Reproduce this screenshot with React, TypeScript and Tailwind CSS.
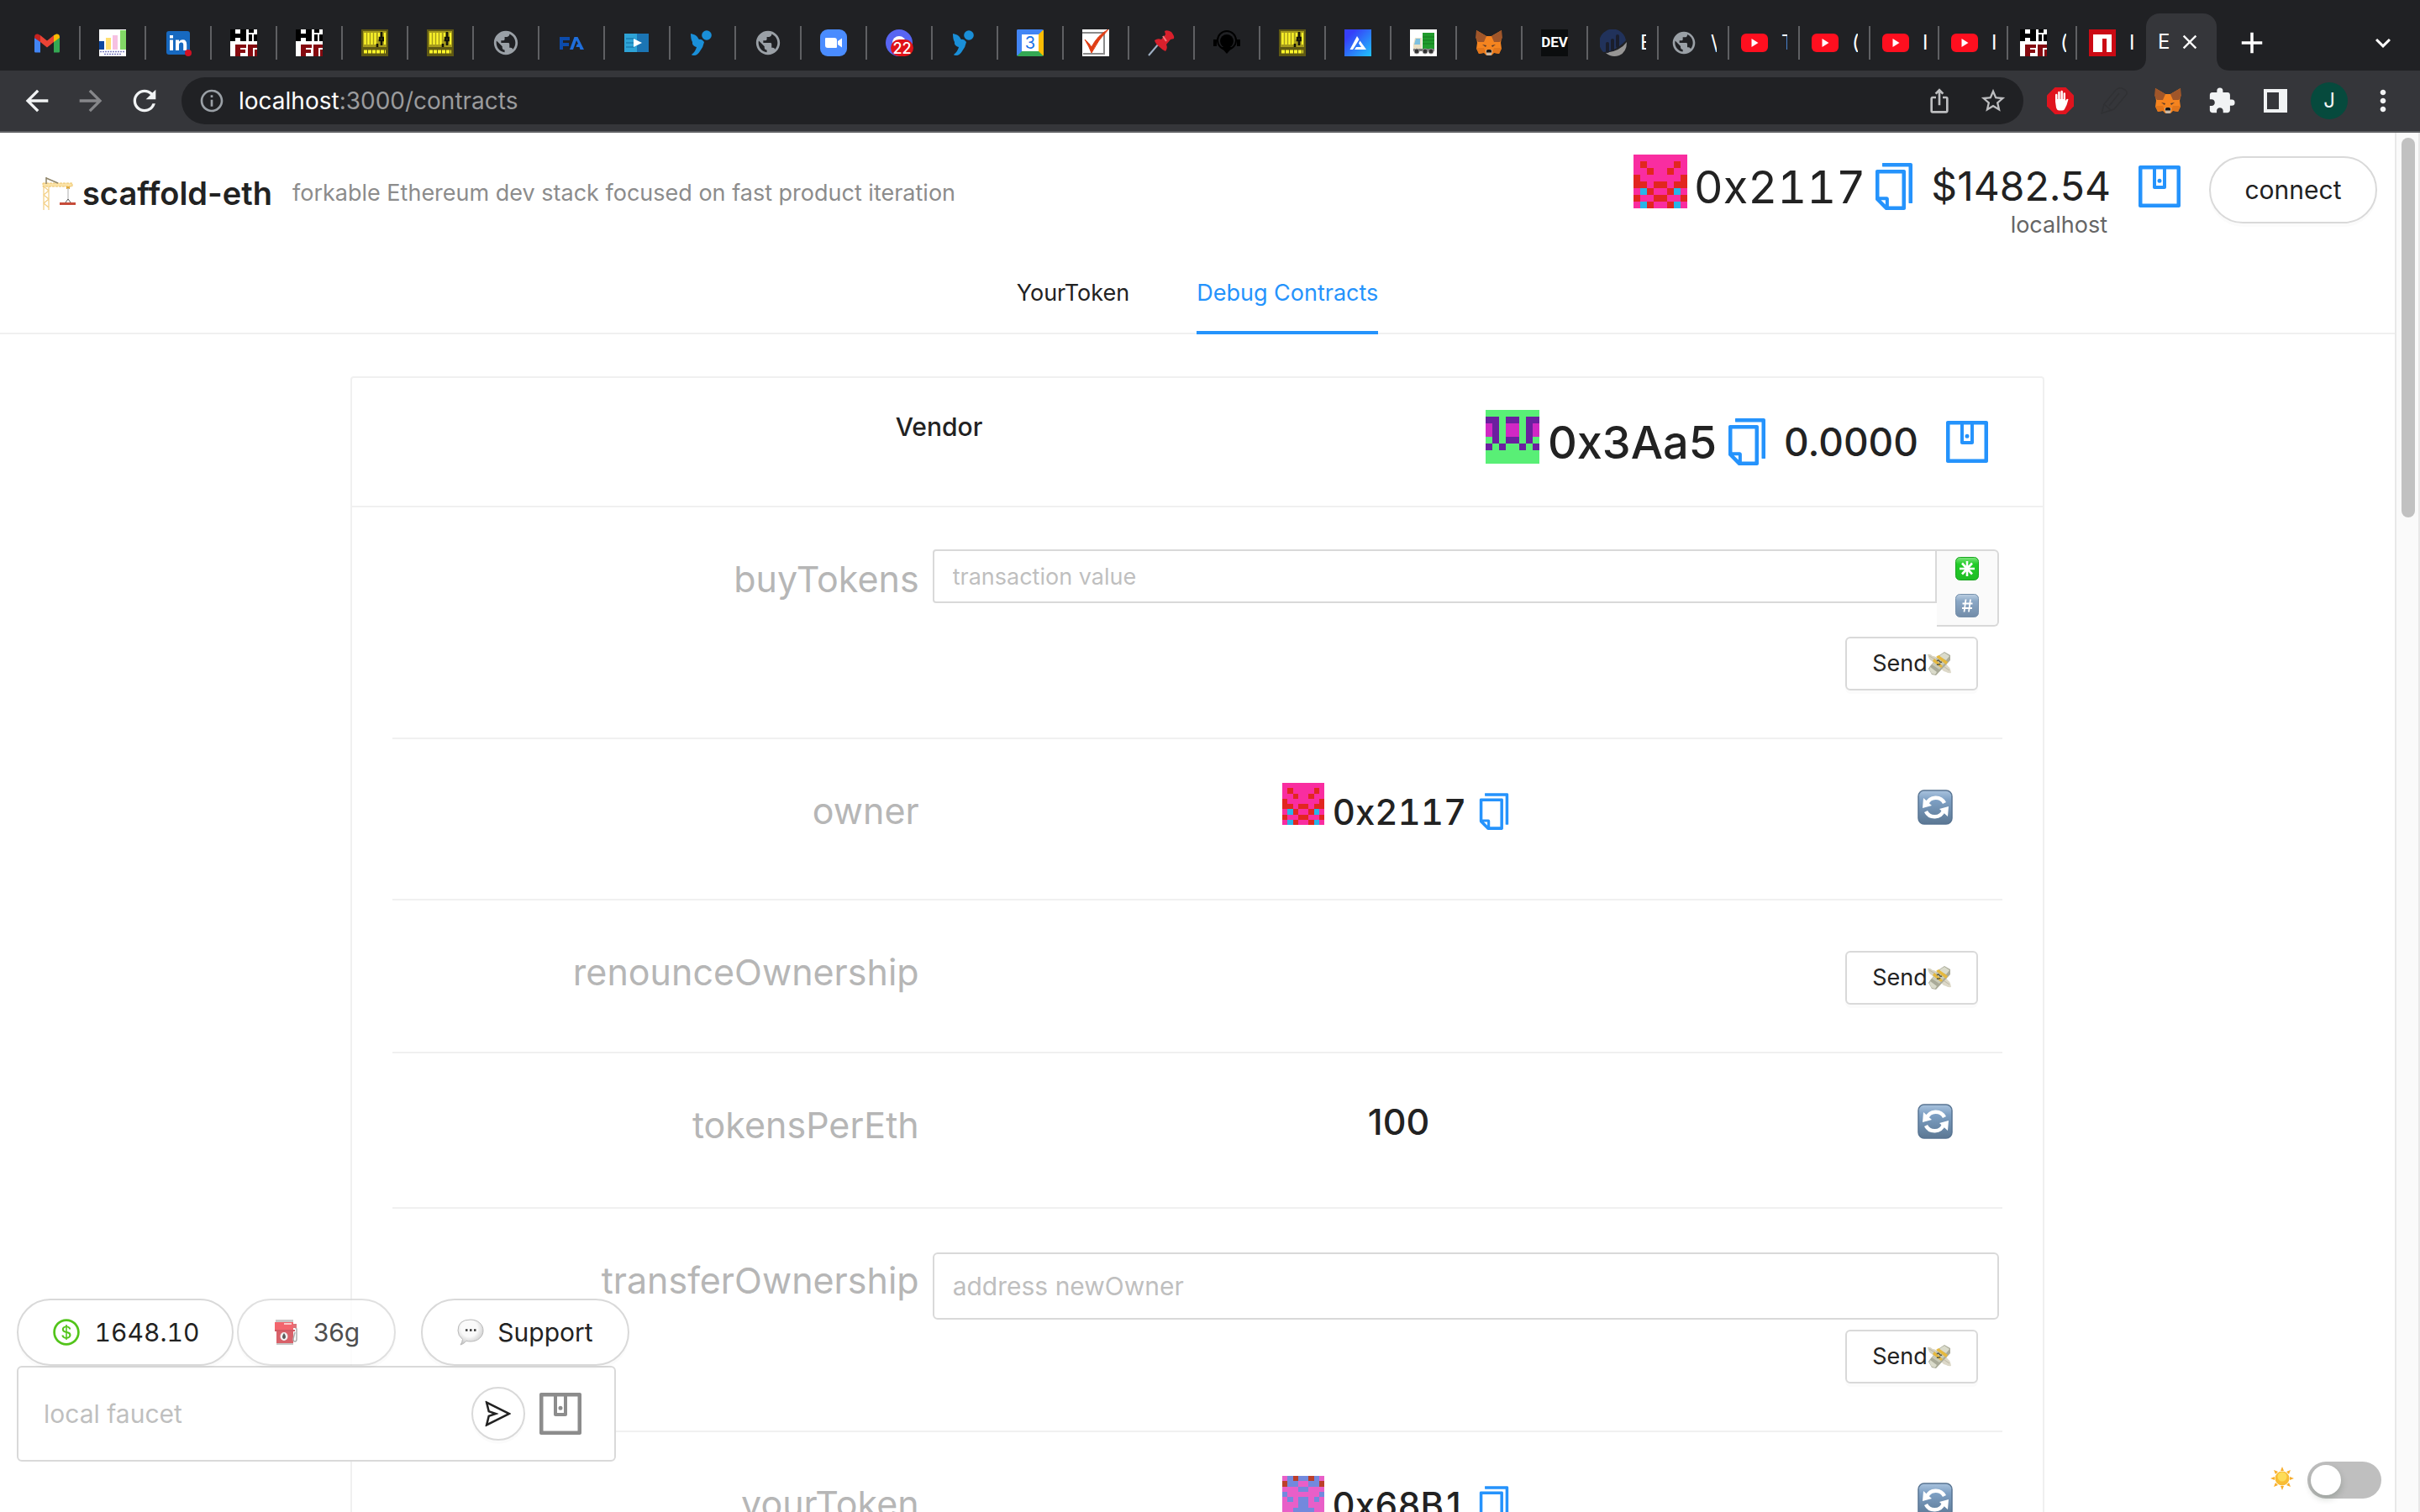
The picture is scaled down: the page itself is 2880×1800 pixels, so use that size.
import { useState } from "react";
import type { ReactNode } from "react";
import { AiOutlineCopy, AiOutlineDollar, AiOutlineSend, AiOutlineWallet } from "react-icons/ai";
import {
  MdAdd,
  MdArrowBack,
  MdArrowForward,
  MdClose,
  MdExpandMore,
  MdExtension,
  MdInfoOutline,
  MdIosShare,
  MdMoreVert,
  MdPublic,
  MdRefresh,
  MdStarBorder,
} from "react-icons/md";

/* ---------- Tab icons ---------- */

function Gmail() {
  return (
    <svg viewBox="0 0 32 32" className="size-8">
      <path d="M1 10v16.500q0 1 1.200 1H8V14z" fill="#4285f4" />
      <path d="M24 14v13.500h5.800q1.200 0 1.200-1V10z" fill="#34a853" />
      <path d="M8 7l8 6.500L24 7v8l-8 6.500L8 15z" fill="#ea4335" />
      <path d="M1 9.500Q1 5 5 5.500L8 7v8l-7-5z" fill="#c5221f" />
      <path d="M31 9.500Q31 5 27 5.500L24 7v8l7-5z" fill="#fbbc04" />
    </svg>
  );
}

function BarChart() {
  return (
    <svg viewBox="0 0 32 32" className="size-8">
      <path d="M0 0h32v32H0z" fill="#fff" />
      <path d="M0 14h6v10H0z" fill="#0d47a1" />
      <path d="M8 10h6v14H8z" fill="#ffdf70" />
      <path d="M16 7h6v17h-6z" fill="#f6c0e2" />
      <path d="M25 1h7v23h-7z" fill="#82d866" />
      <path d="M1 26.500h30M6 29.500h20" stroke="#7d7fc0" strokeWidth="1.400" strokeDasharray="2 1" />
    </svg>
  );
}

function LinkedIn() {
  return (
    <svg viewBox="0 0 32 32" className="size-8">
      <rect x="2" y="2" width="28" height="28" rx="3" fill="#1769c0" />
      <path d="M6 12.500h4V25H6zM6 7h4v3.500H6zM13 12.500h4v2q1.500-2.300 4.500-2.300 4.700 0 4.700 5.800v7h-4v-6.500q0-3-2.300-3-2.900 0-2.900 3.300V25h-4z" fill="#fff" />
      <circle cx="28" cy="28" r="4" fill="#d11124" />
    </svg>
  );
}

function Hifi() {
  return (
    <svg viewBox="0 0 32 32" className="size-8" shapeRendering="crispEdges">
      <path d="M0 0h32v32H0z" fill="#fff" />
      <path d="M0 0h6v5h6V0h7v14h-7v-4H6v4H0zM22 0h6v4h-6zM22 6h4v8h-4zM28 6h4v8h-4z" fill="#000" />
      <path d="M6 18h13v4h-7v2h6v4h-6v4H6zM21 18h11v4h-5v10h-6zM29 24h3v8h-3z" fill="#850a10" />
    </svg>
  );
}

function Mp3() {
  return (
    <svg viewBox="0 0 32 32" className="size-8">
      <path d="M0 0h32v32H0z" fill="#5f5913" />
      <path d="M2 2h28v19H2z" fill="#a79d1c" />
      <path d="M4.500 4v14M8.500 4v14M12.500 4v14M16.500 4v14M21 4v8" stroke="#fdf52a" strokeWidth="2.400" />
      <path d="M24 3v6M22 10h4v3h-4zM24 14v5M19 17v4" stroke="#14140a" strokeWidth="2.600" fill="none" />
      <path d="M28 4v14" stroke="#fdf52a" strokeWidth="2" />
      <path d="M3 26.500h26" stroke="#fdf52a" strokeWidth="4" strokeDasharray="4 1" />
    </svg>
  );
}

function Globe() {
  return <MdPublic className="size-[34px] text-[#9aa0a6]" />;
}

function FaMark() {
  return (
    <svg viewBox="0 0 32 32" className="size-8">
      <path d="M2 9h12v4H6v3h7v4H6v4H2z" fill="#0c4bab" />
      <path d="M14 24l5.500-15h4L31 24h-4.500l-1-3h-4l1.200-3.500h1.500L22 13l-4 11z" fill="#1f6fdc" />
    </svg>
  );
}

function PlayBook() {
  return (
    <svg viewBox="0 0 32 32" className="size-8">
      <path d="M1 5h15v22H1z" fill="#2ea3d6" />
      <path d="M16 5h14v22H16z" fill="#1b75b4" />
      <path d="M3 11h10M3 16h10M3 21h10" stroke="#1e86bb" strokeWidth="2" />
      <path d="M12 11l10 5-10 5z" fill="#fff" />
    </svg>
  );
}

function Bird() {
  return (
    <svg viewBox="0 0 32 32" className="size-8">
      <circle cx="21" cy="7" r="5.800" fill="#1a8fd8" />
      <path d="M2 5q6 1 8 4 1 2 2 3 3-1 6 3-1 6-5 11-3 5-7 5-3 0-3-1 5-4 6-9-4-1-5-4 0-1 0-2-2-3-2-10z" fill="#1a8fd8" />
    </svg>
  );
}

function Zoom() {
  return (
    <svg viewBox="0 0 32 32" className="size-8">
      <rect width="32" height="32" rx="9" fill="#4a8cff" />
      <path d="M6 11q0-1 1-1h10q3 0 3 3v8q0 1-1 1H9q-3 0-3-3zM21 14l5-3.500v11L21 18z" fill="#fff" />
    </svg>
  );
}

function Discord() {
  return (
    <span className="relative block size-8 rounded-full bg-[#5865f2]">
      <span className="absolute left-2 top-2 h-3 w-4 rounded-t-full bg-white" />
      <span className="absolute -right-px bottom-0 flex h-5 w-[27px] items-center justify-center rounded-full bg-[#df1218] text-[18px] font-medium text-white">
        22
      </span>
    </span>
  );
}

function Calendar() {
  return (
    <span className="flex size-8 items-center justify-center overflow-hidden rounded-[2px] border-6 border-l-[#4285f4] border-t-[#4285f4] border-r-[#fbbc04] border-b-[#34a853] bg-white text-[20px] text-[#1a73e8]">
      3
    </span>
  );
}

function CheckBox() {
  return (
    <svg viewBox="0 0 32 32" className="size-8">
      <path d="M0 0h32v32H0z" fill="#fff" />
      <path d="M0 4h26v25H1" fill="none" stroke="#8b8b8b" strokeWidth="2" />
      <path d="M3 12q5 4 8 9Q18 7 31 0 19 12 11 28 8 20 3 12z" fill="#e03d14" stroke="#e03d14" />
    </svg>
  );
}

function Pin() {
  return (
    <svg viewBox="0 0 32 32" className="size-8">
      <path d="M1 31l12-14" stroke="#9fb0c4" strokeWidth="2" />
      <path d="M20 2q3-2 8 1 4 5 3 8l-4 1-5 6q2 4-1 8-3-1-7-5-5-4-6-8 4-3 8-1l5-6z" fill="#d9202c" />
      <path d="M18 8l4 6" stroke="#f47a80" strokeWidth="2" />
    </svg>
  );
}

function Headphones() {
  return (
    <svg viewBox="0 0 32 32" className="size-8">
      <circle cx="16" cy="13" r="11" fill="none" stroke="#000" strokeWidth="2" />
      <circle cx="16" cy="14" r="8" fill="#000" />
      <path d="M0 12h4v8H0zM28 12h4v8h-4zM9 21h14l-7 8z" fill="#000" />
    </svg>
  );
}

function Alchemy() {
  return (
    <svg viewBox="0 0 32 32" className="size-8">
      <defs>
        <linearGradient id="alchemy" x1="0" y1="0" x2="1" y2="1">
          <stop offset="0.200" stopColor="#363ff9" />
          <stop offset="1" stopColor="#1fc4fb" />
        </linearGradient>
      </defs>
      <path d="M0 0h32v32H0z" fill="url(#alchemy)" />
      <path d="M15 8l2.500 4L10 24H6.500zM18.500 13.500L26 24H12l2-3h6l-3-4.500z" fill="#fff" />
    </svg>
  );
}

function Truck() {
  return (
    <svg viewBox="0 0 32 32" className="size-8">
      <path d="M0 0h32v32H0z" fill="#fff" />
      <path d="M15 4h14v20H15z" fill="#219c2d" />
      <path d="M15 9h14M15 13h14M15 17h14" stroke="#167a20" />
      <path d="M6 10h8v14H4v-6z" fill="#e9dfc3" />
      <path d="M7 11h5v7H5z" fill="#7cc0e0" />
      <path d="M4 23h25v3H4z" fill="#777" />
      <g fill="#333" stroke="#999" strokeWidth="1">
        <circle cx="8" cy="26" r="3" />
        <circle cx="18" cy="26" r="3" />
        <circle cx="25" cy="26" r="3" />
      </g>
    </svg>
  );
}

function Fox() {
  return (
    <svg viewBox="0 0 32 32" className="size-8">
      <path d="M1 1l12 7h6l12-7v9l-1 6 1 7-3 6-6-1-3 3h-6l-3-3-6 1-3-6 1-7-1-6z" fill="#f5841f" />
      <path d="M1 1l12 7-3 7H3L0 10zM31 1L19 8l3 7h7l3-5z" fill="#a0562a" />
      <path d="M1 22h9l2 5-3 1-5 1zM31 22h-9l-2 5 3 1 5 1z" fill="#e2761b" />
      <path d="M8 18l5 1-1 2zM24 18l-5 1 1 2z" fill="#5b3a28" />
      <path d="M12 25l2-1h4l2 1-1 5-1 1h-4l-1-1z" fill="#c9b8a6" />
      <path d="M13 25l1.500-1h3l1.500 1v2.500h-6z" fill="#161616" />
    </svg>
  );
}

function Dev() {
  return (
    <span className="flex size-8 items-center justify-center bg-[#0b0d0e] font-['Roboto'] text-[17px] font-bold text-white">DEV</span>
  );
}

function Etherscan() {
  return (
    <svg viewBox="0 0 32 32" className="size-8">
      <path d="M4 27A16 16 0 1131 13q-7 8-17 12-5 2-10 2z" fill="#21325b" />
      <path d="M7 28q17-2 25-13 0 12-9 16-9 3-16-3z" fill="#979695" />
      <path d="M9 17v9M15 13v11M21 8v12" stroke="#1a1e2c" strokeWidth="4" strokeLinecap="round" />
    </svg>
  );
}

function YouTube() {
  return (
    <svg viewBox="0 0 32 32" className="size-8">
      <rect y="5" width="32" height="22" rx="6" fill="#ff0f1f" />
      <path d="M12.500 11l8 5-8 5z" fill="#fff" />
    </svg>
  );
}

function Npm() {
  return (
    <svg viewBox="0 0 32 32" className="size-8">
      <path d="M0 0h32v32H0z" fill="#cb0a14" />
      <path d="M5 6h22v21h-6V11h-5v16H5z" fill="#fff" />
    </svg>
  );
}

type Icon = () => ReactNode;

const pinnedTabs: [string, Icon][] = [
  ["Gmail", Gmail],
  ["Java Tech Online", BarChart],
  ["LinkedIn", LinkedIn],
  ["HiFi", Hifi],
  ["HiFi", Hifi],
  ["Web3 store", Mp3],
  ["Web3 store", Mp3],
  ["New page", Globe],
  ["FA", FaMark],
  ["Course", PlayBook],
  ["Bird", Bird],
  ["New page", Globe],
  ["Zoom", Zoom],
  ["Discord", Discord],
  ["Bird", Bird],
  ["Calendar", Calendar],
  ["Tasks", CheckBox],
  ["Pin", Pin],
  ["Podcast", Headphones],
  ["Web3 store", Mp3],
  ["Alchemy", Alchemy],
  ["Truck", Truck],
  ["MetaMask", Fox],
  ["DEV", Dev],
];

const titledTabs: [string, Icon][] = [
  ["E", Etherscan],
  ["\\", Globe],
  ["T", YouTube],
  ["(", YouTube],
  ["I", YouTube],
  ["I", YouTube],
  ["(", Hifi],
  ["I", Npm],
];

function TabStrip() {
  return (
    <div className="flex h-[84px] items-end bg-[#202124] pl-[18px] text-white">
      {pinnedTabs.map(([name, TabIcon], i) => (
        <button key={i} aria-label={name} className="mb-[13px] flex h-10 w-[78px] shrink-0 items-center justify-center border-r-2 border-[#5f6063]">
          <TabIcon />
        </button>
      ))}
      {titledTabs.map(([title, TabIcon], i) => (
        <button
          key={i}
          className={`mb-[13px] flex h-10 shrink-0 items-center border-r-2 pl-3.5 ${i < 4 ? "w-[84px]" : "w-[82px]"} ${i === titledTabs.length - 1 ? "border-transparent" : "border-[#5f6063]"}`}
        >
          <span className="flex size-8 shrink-0 items-center justify-center">
            <TabIcon />
          </span>
          <span className="ml-4 w-[7px] overflow-hidden text-left text-[24px] leading-8">{title}</span>
        </button>
      ))}
      <div className="relative flex h-[68px] w-[84px] shrink-0 items-center justify-between rounded-t-2xl bg-[#35363a] pl-3.5 pr-[18px]">
        <svg viewBox="0 0 16 16" className="absolute -left-4 bottom-0 size-4">
          <path d="M16 0v16H0Q16 16 16 0z" fill="#35363a" />
        </svg>
        <svg viewBox="0 0 16 16" className="absolute -right-4 bottom-0 size-4">
          <path d="M0 0v16h16Q0 16 0 0z" fill="#35363a" />
        </svg>
        <span className="text-[24px] leading-8">E</span>
        <button aria-label="Close tab">
          <MdClose className="size-7" />
        </button>
      </div>
      <button aria-label="New tab" className="mb-[13px] ml-[22px] flex size-10 items-center justify-center">
        <MdAdd className="size-[42px] shrink-0" />
      </button>
      <button aria-label="Search tabs" className="mb-[13px] ml-auto mr-6 flex size-10 items-center justify-center">
        <MdExpandMore className="size-9" />
      </button>
    </div>
  );
}

function ToolButton({ label, children }: { label: string; children: ReactNode }) {
  return (
    <button aria-label={label} className="flex h-14 w-16 shrink-0 items-center justify-center">
      {children}
    </button>
  );
}

function Toolbar() {
  return (
    <div className="flex h-[74px] items-center border-b-2 border-[#5f6063] bg-[#35363a] px-3 text-[#f1f3f4]">
      <ToolButton label="Back">
        <MdArrowBack className="size-10" />
      </ToolButton>
      <ToolButton label="Forward">
        <MdArrowForward className="size-10 text-[#86878a]" />
      </ToolButton>
      <ToolButton label="Reload">
        <MdRefresh className="size-10" />
      </ToolButton>
      <div className="mx-3 flex h-14 flex-1 items-center rounded-full bg-[#202124] pl-5 pr-1">
        <MdInfoOutline className="size-8 text-[#9aa0a6]" />
        <p className="ml-4 flex-1 text-[28px] text-[#9a9b9d]">
          <span className="text-white">localhost</span>:3000/contracts
        </p>
        <ToolButton label="Share">
          <MdIosShare className="size-8 text-[#bdbec0]" />
        </ToolButton>
        <ToolButton label="Bookmark">
          <MdStarBorder className="size-[34px] text-[#bdbec0]" />
        </ToolButton>
      </div>
      <ToolButton label="Ad blocker">
        <svg viewBox="0 0 32 32" className="size-8">
          <path d="M9.500 0h13L32 9.500v13L22.500 32h-13L0 22.500v-13z" fill="#e0141e" />
          <path d="M10 17V9q0-1.300 1.200-1.300T12.500 9v5h.7V6q0-1.300 1.200-1.300T15.700 6v8h.7V5q0-1.300 1.200-1.300T18.900 5v9h.7V7.500q0-1.300 1.200-1.300T22 7.500V16l1.500-2q1.200-.8 2 .3Q24 21 21 26q-1 1.500-3 1.500h-3.500q-2.500 0-3.500-3.500z" fill="#fff" />
        </svg>
      </ToolButton>
      <ToolButton label="Notes">
        <svg viewBox="0 0 32 32" className="size-8" fill="none" stroke="#303134" strokeWidth="1.500">
          <path d="M1 31l3-11L18 3q5-4 9-1 5 2 4 6L16 26z" />
          <path d="M10 22L22 7M4 20l8 7" />
        </svg>
      </ToolButton>
      <ToolButton label="MetaMask">
        <Fox />
      </ToolButton>
      <ToolButton label="Extensions">
        <MdExtension className="size-[34px]" />
      </ToolButton>
      <ToolButton label="Side panel">
        <svg viewBox="0 0 28 28" className="size-7">
          <path d="M0 0h28v28H0zM4 4v20h14V4z" fill="#f1f3f4" fillRule="evenodd" />
        </svg>
      </ToolButton>
      <ToolButton label="Profile">
        <span className="flex size-11 items-center justify-center rounded-full bg-[#064a3d] text-[24px]">J</span>
      </ToolButton>
      <ToolButton label="Menu">
        <MdMoreVert className="size-10" />
      </ToolButton>
    </div>
  );
}

/* ---------- Emoji-style drawings ---------- */

function Crane() {
  return (
    <svg viewBox="0 0 40 40" className="size-10">
      <path d="M2 10v30M8 10v30M2 12l6 5-6 5 6 5-6 5 6 5M8 17l-6 5M8 27l-6 5" stroke="#f3d188" strokeWidth="1.300" fill="none" />
      <path d="M1 8h35v4H1z" fill="#fbe3a8" stroke="#edc468" strokeDasharray="3 1" />
      <path d="M5 1v8M5 2l14 6" stroke="#8f8468" strokeWidth="1.500" />
      <path d="M29 12h4v3h-4z" fill="#e0a93c" />
      <path d="M31 14v14" stroke="#c8c8c8" strokeWidth="1.500" />
      <path d="M28 31l3-4 3 4" stroke="#555" fill="none" />
      <path d="M21 31h19v3H21z" fill="#c64c3a" />
    </svg>
  );
}

function MoneyWings() {
  return (
    <svg viewBox="0 0 28 28" className="size-7">
      <path d="M0 3q3-1 6 2 4 0 6 4l-3 4q-3 0-4-2-4-2-5-8z" fill="#d6d2c0" />
      <path d="M19 14q4 0 5 3 3 1 4 8-3 1-6-1-3 0-5-3z" fill="#dcd8c8" />
      <path d="M2 5l7 4M20 18l6 4" stroke="#b5b09c" strokeWidth="0.800" />
      <path d="M14 4l6-4 7 4v6L10 28l-5-1-4-7 2-3z" fill="#a9aa98" />
      <path d="M15 4l5-3 6 4-4 5-8-4zM3 18l8 6-2 3-4-1-3-5z" fill="#dadbcb" />
      <path d="M12 7l9 6-7 8-9-6z" fill="#c9cab6" />
      <path d="M10 6l3-2 11 8-2 3zM6 11l2-3 10 9-2 2z" fill="#e6b93e" />
      <path d="M11 11q2-2 3 0t3 1M11 15q3 1 4-1" stroke="#55553f" strokeWidth="1.500" fill="none" />
    </svg>
  );
}

function Refresh() {
  return (
    <svg viewBox="0 0 42 42" className="size-[42px]">
      <defs>
        <linearGradient id="keycap" x1="0" y1="0" x2="0" y2="1">
          <stop offset="0" stopColor="#a9c3de" />
          <stop offset="0.300" stopColor="#7d9fc3" />
          <stop offset="1" stopColor="#5b7793" />
        </linearGradient>
      </defs>
      <rect x="1" y="1" width="40" height="40" rx="7" fill="url(#keycap)" stroke="#587492" strokeWidth="1.500" />
      <path d="M11 17a11.500 11.500 0 0121-1M31 25a11.500 11.500 0 01-21 1" fill="none" stroke="#fff" strokeWidth="4.500" />
      <path d="M7 10l-1 12 11-3zM36 32l1-12-11 3z" fill="#fff" />
    </svg>
  );
}

function GreenStar() {
  return (
    <svg viewBox="0 0 28 28" className="size-7">
      <defs>
        <linearGradient id="star-key" x1="0" y1="0" x2="0" y2="1">
          <stop offset="0" stopColor="#7fe57f" />
          <stop offset="0.300" stopColor="#22cc28" />
          <stop offset="1" stopColor="#1fbd25" />
        </linearGradient>
      </defs>
      <rect x="0.500" y="0.500" width="27" height="27" rx="5" fill="url(#star-key)" stroke="#19a51f" />
      <path d="M14 5v18M5 14h18M8 7.500l12 13M20 7.500l-12 13" stroke="#fff" strokeWidth="2.600" />
    </svg>
  );
}

function HashKey() {
  return (
    <svg viewBox="0 0 28 28" className="size-7">
      <defs>
        <linearGradient id="hash-key" x1="0" y1="0" x2="0" y2="1">
          <stop offset="0" stopColor="#bccfe2" />
          <stop offset="0.300" stopColor="#8ba8c6" />
          <stop offset="1" stopColor="#728ca8" />
        </linearGradient>
      </defs>
      <rect x="0.500" y="0.500" width="27" height="27" rx="5" fill="url(#hash-key)" stroke="#7690ab" />
      <path d="M12.500 6.500l-2 15M18 6.500l-2 15M8.500 11.500h12M8 17h12" stroke="#fff" strokeWidth="1.800" />
    </svg>
  );
}

function FuelPump() {
  return (
    <svg viewBox="0 0 32 32" className="size-8">
      <path d="M4 2h20v29H4z" fill="#cf3a44" />
      <path d="M2 13h24v2H2z" fill="#c5323d" />
      <path d="M3 1h21v3H3zM4 29h20v2H4z" fill="#b9b9b9" />
      <path d="M2 4h22v9H2z" fill="#f0414b" />
      <path d="M13 5h9v2h-9z" fill="#f8c0c0" />
      <ellipse cx="13" cy="21" rx="4.500" ry="5" fill="#eee" />
      <path d="M13 17q-3 4-1.500 6t3 0Q16 21 13 17z" fill="#333" />
      <path d="M25 9l3 3v12q0 3-2 3t-2-3l2-8" fill="none" stroke="#999" strokeWidth="1.500" />
      <path d="M24 6h4v5h-4z" fill="#d4525a" />
    </svg>
  );
}

function Speech() {
  return (
    <svg viewBox="0 0 32 32" className="size-8">
      <defs>
        <radialGradient id="bubble" cx="0.450" cy="0.350" r="0.650">
          <stop offset="0.500" stopColor="#fafafa" />
          <stop offset="1" stopColor="#c6c6c6" />
        </radialGradient>
      </defs>
      <path d="M16 1c8.500 0 15 5.500 15 13s-6.500 13-15 13q-3 0-5-.7Q8 30 4 31q2-3 2.500-6.500Q1 20 1 14 1 1 16 1z" fill="url(#bubble)" stroke="#b9b9b9" />
      <path d="M10 13.500h2.500M15 13.500h2.500M20 13.500h2.500" stroke="#333" strokeWidth="2.500" />
    </svg>
  );
}

function Sun() {
  return (
    <svg viewBox="0 0 28 28" className="size-7">
      <path d="M14 0l2 5h-4zM14 28l2-5h-4zM0 14l5-2v4zM28 14l-5-2v4zM4 4l5 2-3 3zM24 4l-5 2 3 3zM4 24l5-2-3-3zM24 24l-5-2 3-3z" fill="#f8ae2c" />
      <circle cx="14" cy="14" r="8.500" fill="#f9bd34" />
      <circle cx="14" cy="12" r="5.500" fill="#fddc58" />
    </svg>
  );
}

/* ---------- Addresses ---------- */

const palettes: Record<string, Record<string, string>> = {
  red: { a: "#f92da0", b: "#e2261f", c: "#29b4e8" },
  green: { a: "#59ef76", b: "#6b1f9f", c: "#d128c4" },
  violet: { a: "#e85fc8", b: "#7389dd", c: "#bd3f2a" },
};

// Left half of every row; the right half mirrors it.
const patterns: Record<string, string[]> = {
  red: ["aaaa", "abaa", "aaba", "baaa", "bbab", "acba", "baab", "acba"],
  green: ["aaaa", "bbab", "cbac", "cbac", "abab", "baba", "aaaa", "aaaa"],
  violet: ["abcb", "cbba", "aaab", "baaa", "abab", "aaab", "aabb", "aaab"],
};

function Blockie({ kind, className }: { kind: string; className: string }) {
  return (
    <svg viewBox="0 0 8 8" className={className} shapeRendering="crispEdges">
      {patterns[kind].map((half, y) =>
        (half + half.split("").reverse().join("")).split("").map((cell, x) => (
          <rect key={`${x}-${y}`} x={x} y={y} width="1" height="1" fill={palettes[kind][cell]} />
        )),
      )}
    </svg>
  );
}

function CopyButton({ large = false }: { large?: boolean }) {
  return (
    <button aria-label="Copy address" className="text-[#2593fc]">
      <AiOutlineCopy className={large ? "size-16" : "size-[50px]"} />
    </button>
  );
}

function WalletButton() {
  return (
    <button aria-label="Open wallet" className="text-[#2593fc]">
      <AiOutlineWallet className="size-16 -rotate-90" />
    </button>
  );
}

function RowAddress({ kind, address }: { kind: string; address: string }) {
  return (
    <div className="flex h-[68px] items-center">
      <Blockie kind={kind} className="size-[50px] self-start" />
      <span className="ml-2.5 text-[42px] font-medium tabular-nums">{address}</span>
      <span className="ml-2 flex">
        <CopyButton />
      </span>
    </div>
  );
}

/* ---------- Page ---------- */

function Header() {
  return (
    <header className="flex items-start pl-[50px] pr-[21px] pt-[26px]">
      <div className="flex h-[92px] items-center">
        <Crane />
        <h1 className="ml-2 text-[38px] font-semibold">scaffold-eth</h1>
        <p className="ml-6 text-[27px] text-[#8c8c8c]">forkable Ethereum dev stack focused on fast product iteration</p>
      </div>
      <div className="ml-auto h-[122px]">
        <div className="flex h-[76px] items-center">
          <Blockie kind="red" className="size-16 self-start" />
          <span className="ml-2 text-[54px] tabular-nums">0x2117</span>
          <span className="ml-0.5 flex">
            <CopyButton large />
          </span>
          <span className="ml-3 text-[48px]">$1482.54</span>
        </div>
        <p className="pr-1 text-right text-[27px] leading-4 text-[#666]">localhost</p>
      </div>
      <div className="ml-[26px] flex h-[76px] items-center">
        <WalletButton />
      </div>
      <button className="ml-[27px] mt-0.5 h-20 w-[200px] rounded-full border-2 border-[#d9d9d9] text-[30px] shadow-[0_4px_0_rgba(0,0,0,0.015)]">connect</button>
    </header>
  );
}

function Nav() {
  return (
    <nav className="flex justify-center gap-20 text-[27px] shadow-[inset_0_-2px_0_#f0f0f0]">
      <a href="#token" className="flex h-[92px] items-center border-b-4 border-transparent pb-0.5">
        YourToken
      </a>
      <a href="#debug" className="flex h-[92px] items-center border-b-4 border-[#2593fc] pb-0.5 text-[#2593fc]">
        Debug Contracts
      </a>
    </nav>
  );
}

function Row({ name, field, children }: { name: string; field?: string; children: ReactNode }) {
  return (
    <div className="grid grid-cols-[1fr_2fr] border-b-2 border-[#f0f0f0] pt-[50px]">
      <label htmlFor={field} className="pr-3 text-right text-[43px] leading-[70px] text-[#b6b6b6]">
        {name}
      </label>
      {children}
    </div>
  );
}

function SendButton() {
  return (
    <button className="mr-[25px] flex h-16 w-[158px] items-center justify-center self-end rounded-md border-2 border-[#d9d9d9] bg-white text-[27px] shadow-[0_4px_0_rgba(0,0,0,0.015)]">
      Send
      <MoneyWings />
    </button>
  );
}

function ReadRow({ name, children }: { name: string; children: ReactNode }) {
  return (
    <Row name={name}>
      <div className="grid grid-cols-[7fr_1fr] pt-0.5">
        <div className="flex justify-center">{children}</div>
        <div className="flex items-start justify-center pt-2">
          <button aria-label={`Refresh ${name}`}>
            <Refresh />
          </button>
        </div>
      </div>
    </Row>
  );
}

function ContractCard() {
  return (
    <section className="mx-auto mt-[50px] w-[70vw] rounded border-2 border-[#f0f0f0]">
      <div className="flex h-[154px] items-start border-b-2 border-[#f0f0f0] px-12 pt-[38px]">
        <h2 className="flex-1 text-center text-[30px] font-medium leading-10">Vendor</h2>
        <div className="flex h-[76px] items-center pr-2.5">
          <Blockie kind="green" className="size-16 self-start" />
          <span className="ml-2.5 text-[54px] font-medium">0x3Aa5</span>
          <span className="ml-1 flex">
            <CopyButton large />
          </span>
          <span className="ml-3 mr-[26px] text-[46px] font-medium">0.0000</span>
          <WalletButton />
        </div>
      </div>
      <div className="px-12">
        <Row name="buyTokens" field="tx-value">
          <div className="flex flex-col px-1 pb-14">
            <div className="flex items-start">
              <input
                id="tx-value"
                placeholder="transaction value"
                className="h-16 min-w-0 flex-1 rounded-l border-2 border-[#d9d9d9] px-[22px] text-[27px] placeholder:text-[#bfbfbf]"
              />
              <div className="flex h-[92px] w-[74px] flex-col items-center justify-between rounded-r-md border-2 border-l-0 border-[#d9d9d9] bg-[#fafafa] pb-[9px] pt-[7px]">
                <button aria-label="Multiply by 10^18">
                  <GreenStar />
                </button>
                <button aria-label="Convert to hex">
                  <HashKey />
                </button>
              </div>
            </div>
            <div className="mt-3 flex flex-col">
              <SendButton />
            </div>
          </div>
        </Row>
        <ReadRow name="owner">
          <div className="pb-[70px]">
            <RowAddress kind="red" address="0x2117" />
          </div>
        </ReadRow>
        <Row name="renounceOwnership">
          <div className="flex flex-col px-1 pb-14 pt-2.5">
            <SendButton />
          </div>
        </Row>
        <ReadRow name="tokensPerEth">
          <p className="pb-[73px] text-[43px] font-medium leading-[58px]">100</p>
        </ReadRow>
        <Row name="transferOwnership" field="new-owner">
          <div className="flex flex-col gap-3 px-1 pb-14 pt-0.5">
            <input
              id="new-owner"
              placeholder="address newOwner"
              className="h-20 rounded-md border-2 border-[#d9d9d9] px-[22px] text-[30px] placeholder:text-[#bfbfbf]"
            />
            <SendButton />
          </div>
        </Row>
        <ReadRow name="yourToken">
          <div className="pb-[70px]">
            <RowAddress kind="violet" address="0x68B1" />
          </div>
        </ReadRow>
      </div>
    </section>
  );
}

function Pill({ className, children }: { className: string; children: ReactNode }) {
  return (
    <button className={`flex h-20 items-center justify-center rounded-full border-2 border-[#d9d9d9] bg-white text-[30px] shadow-[0_4px_0_rgba(0,0,0,0.015)] ${className}`}>
      {children}
    </button>
  );
}

function Faucet() {
  return (
    <div className="absolute bottom-[60px] left-5">
      <div className="flex">
        <Pill className="w-[258px] gap-4">
          <AiOutlineDollar className="size-9 text-[#52c41a]" />
          <span className="tabular-nums">1648.10</span>
        </Pill>
        <Pill className="ml-1 w-[189px] gap-4 opacity-80">
          <FuelPump />
          36g
        </Pill>
        <Pill className="ml-[30px] w-[248px] gap-4">
          <Speech />
          Support
        </Pill>
      </div>
      <div className="flex h-[114px] w-[713px] items-center rounded-md border-2 border-[#d9d9d9] bg-white pl-[30px] pr-8">
        <input aria-label="local faucet" placeholder="local faucet" className="min-w-0 flex-1 text-[30px] placeholder:text-[#bfbfbf]" />
        <button
          aria-label="Send from faucet"
          className="mr-2.5 flex size-16 items-center justify-center rounded-full border-2 border-[#d9d9d9] shadow-[0_4px_0_rgba(0,0,0,0.015)]"
        >
          <AiOutlineSend className="size-9" />
        </button>
        <button aria-label="Faucet wallet" className="text-[#8c8c8c]">
          <AiOutlineWallet className="size-16 -rotate-90" />
        </button>
      </div>
    </div>
  );
}

function ThemeSwitch() {
  const [dark, setDark] = useState(false);
  return (
    <label className="absolute bottom-4 right-4 flex items-center gap-4">
      <span className="pb-1">
        <Sun />
      </span>
      <input type="checkbox" role="switch" aria-label="Dark theme" checked={dark} onChange={() => setDark(!dark)} className="peer sr-only" />
      <span className="flex h-11 w-[88px] items-center rounded-full bg-[#bfbfbf] px-1 peer-checked:justify-end peer-checked:bg-[#2593fc]">
        <span className="size-9 rounded-full bg-white shadow-[0_4px_8px_rgba(0,35,11,0.2)]" />
      </span>
    </label>
  );
}

export default function App() {
  return (
    <div className="flex h-screen flex-col overflow-hidden bg-white font-['Inter','Noto_Sans',sans-serif] text-[#222]">
      <TabStrip />
      <Toolbar />
      <div className="flex min-h-0 flex-1">
        <main className="relative min-w-0 flex-1 overflow-hidden">
          <Header />
          <Nav />
          <ContractCard />
          <Faucet />
          <ThemeSwitch />
        </main>
        <div className="w-[30px] border-x-2 border-[#e8e8e8] bg-[#fafafa] px-1.5 pt-1.5">
          <div className="h-[452px] w-4 rounded-full bg-[#c1c1c1]" />
        </div>
      </div>
    </div>
  );
}
